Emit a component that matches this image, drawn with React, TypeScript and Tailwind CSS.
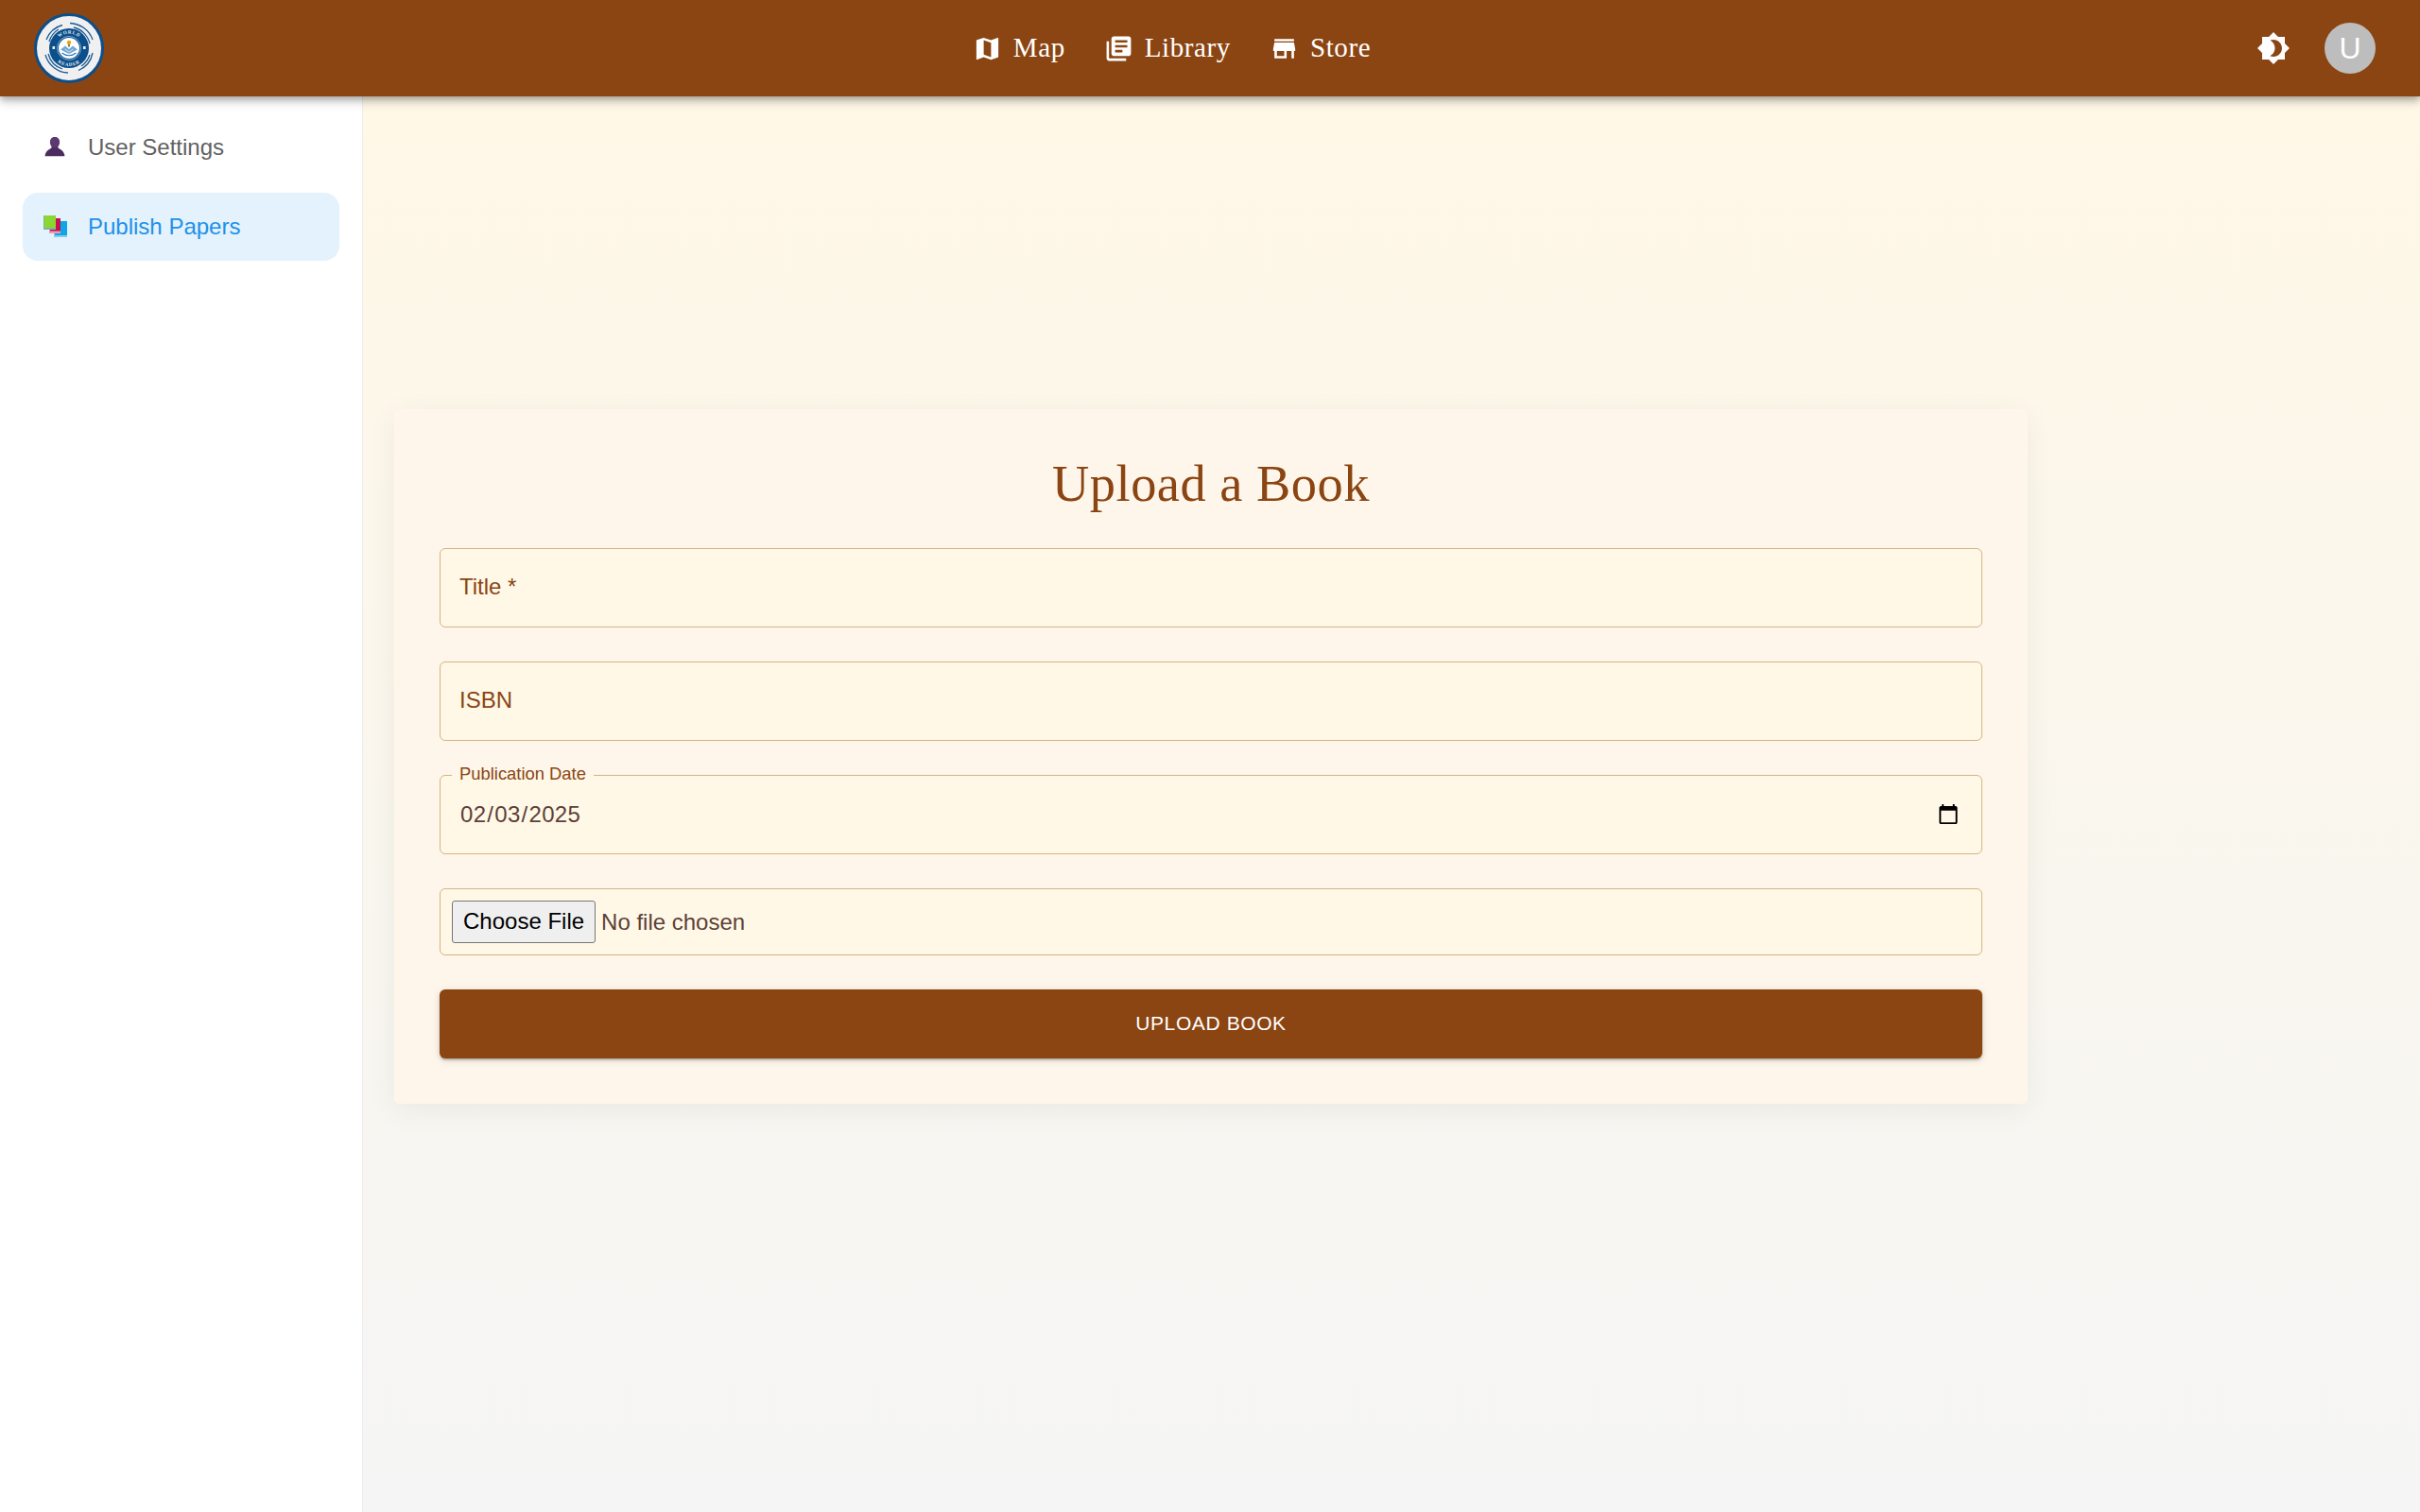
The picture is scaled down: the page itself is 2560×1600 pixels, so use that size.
const navLinks = [
  {
    label: 'Map',
    path: 'M20.5 3l-.16.03L15 5.1 9 3 3.36 4.9c-.21.07-.36.25-.36.48V20.5c0 .28.22.5.5.5l.16-.03L9 18.9l6 2.1 5.64-1.9c.21-.07.36-.25.36-.48V3.5c0-.28-.22-.5-.5-.5zM15 19l-6-2.11V5l6 2.11V19z',
  },
  {
    label: 'Library',
    path: 'M4 6H2v14c0 1.1.9 2 2 2h14v-2H4V6zm16-4H8c-1.1 0-2 .9-2 2v12c0 1.1.9 2 2 2h12c1.1 0 2-.9 2-2V4c0-1.1-.9-2-2-2zm-1 9H9V9h10v2zm-4 4H9v-2h6v2zm4-8H9V5h10v2z',
  },
  {
    label: 'Store',
    path: 'M20 4H4v2h16V4zm1 10v-2l-1-5H4l-1 5v2h1v6h10v-6h4v6h2v-6h1zm-9 4H6v-4h6v4z',
  },
];

const serif = "font-['Liberation_Serif',Georgia,serif]";

function Logo() {
  return (
    <svg viewBox="0 0 74 74" className="w-[74px] h-[74px] shrink-0">
      <defs>
        <path id="logo-top" d="M 21.5 37 A 15.5 15.5 0 0 1 52.5 37" />
        <path id="logo-bottom" d="M 18 37 A 19 19 0 0 0 56 37" />
      </defs>
      <circle cx="37" cy="37" r="35.5" fill="#f0f0f0" stroke="#0b4f8c" strokeWidth="3" />
      {/* broken rings round the seal */}
      <g fill="none" stroke="#1a5c98" strokeWidth="1.3">
        <path d="M 13 28 A 25.5 25.5 0 0 1 30 12.5" />
        <path d="M 38 10.5 A 26.5 26.5 0 0 1 62 28" />
        <path d="M 62 42 A 25.5 25.5 0 0 1 47 60.5" />
        <path d="M 36 63 A 26 26 0 0 1 12 44" />
        <path d="M 16 30 A 22.5 22.5 0 0 1 26 17" />
        <path d="M 42 15 A 23 23 0 0 1 59 32" />
        <path d="M 59 44 A 23 23 0 0 1 50 56" />
        <path d="M 30 59 A 23 23 0 0 1 15 43" />
      </g>
      <circle cx="37" cy="37" r="21" fill="#0b4f8c" />
      <circle cx="37" cy="37" r="12.5" fill="none" stroke="#9fc3e0" strokeWidth="0.8" />
      <circle cx="37" cy="37" r="11" fill="#ffffff" />
      {/* open book and waves */}
      <path d="M28 38.500 L33 34.500 L37 38 L41 34.500 L46 38.500 L37 43 Z" fill="#6ea6d4" />
      <path d="M29.500 42 Q37 47.500 44.500 42" fill="none" stroke="#2a73b5" strokeWidth="1.2" />
      <path d="M32.500 38 L37 41 L41.500 38" fill="none" stroke="#ffffff" strokeWidth="0.7" />
      <circle cx="37" cy="31" r="2.200" fill="#e8a317" />
      <rect x="36.200" y="33" width="1.600" height="2.500" fill="#6b5a2a" />
      <path d="M19.500 35 h2.600 v3 h-2.600 z M52 35 h2.600 v3 h-2.600 z" fill="#f0f0f0" />
      <text fontSize="5" fontWeight="700" fill="#f0f0f0" letterSpacing="0.8" textAnchor="middle" fontFamily="'Liberation Serif', serif">
        <textPath href="#logo-top" startOffset="50%">WORLD</textPath>
      </text>
      <text fontSize="5" fontWeight="700" fill="#f0f0f0" letterSpacing="0.8" textAnchor="middle" fontFamily="'Liberation Serif', serif">
        <textPath href="#logo-bottom" startOffset="50%">READER</textPath>
      </text>
    </svg>
  );
}

function UserIcon() {
  return (
    <svg viewBox="0 0 24 26" className="w-[22px] h-[24px] shrink-0">
      <path d="M12 1c3.4 0 5.4 2.6 5.4 6 0 1.6-.5 3-1.3 4.2-.6 1-.7 2 .1 2.6 1.9 1.3 5.6 2.6 6.8 7.2.3 1.2.3 2 .3 2H.7s0-.8.3-2c1.200-4.600 4.900-5.900 6.800-7.200.8-.6.7-1.600.1-2.600C7.100 10 6.600 8.600 6.600 7 6.600 3.600 8.600 1 12 1z" fill="#4b2c5e" />
      <path d="M12 1c3.4 0 5.4 2.600 5.400 6 0 3.600-2.500 6.500-5.400 6.500S6.600 10.600 6.600 7C6.600 3.600 8.600 1 12 1z" fill="#5b3a72" />
    </svg>
  );
}

function BooksIcon() {
  return (
    <svg viewBox="0 0 26 24" className="w-[26px] h-[24px] shrink-0">
      <rect x="11" y="6.500" width="14" height="16.500" rx="0.500" fill="#8ecae6" />
      <rect x="12" y="6" width="13" height="15" fill="#0ea5e9" />
      <rect x="6" y="3.500" width="12" height="15.500" rx="0.500" fill="#e3a0b8" />
      <rect x="7" y="3" width="11" height="13.500" fill="#c8104f" />
      <rect x="0" y="0" width="13" height="15" rx="0.500" fill="#7fb3a0" />
      <rect x="1" y="0" width="12" height="13" fill="#8cd630" />
    </svg>
  );
}

function Field({ label }: { label: string }) {
  return (
    <div className="relative h-[84px] rounded-[6px] border border-[#d4b483] bg-[#fff8e7]">
      <input aria-label={label} className="w-full h-full bg-transparent px-[20px] outline-none" />
      <span className="absolute left-[20px] top-[25px] text-[24px] leading-[30px] text-[#8b4513] pointer-events-none">
        {label}
      </span>
    </div>
  );
}

export default function App() {
  return (
    <div className="h-screen flex flex-col overflow-hidden font-['Liberation_Sans',Arial,sans-serif]">
      <header className="relative z-10 h-[102px] shrink-0 flex items-center pl-[36px] pr-[47px] bg-[#8b4513] text-white shadow-[0_3px_6px_-1px_rgba(0,0,0,0.2),0_6px_8px_0_rgba(0,0,0,0.14),0_2px_16px_0_rgba(0,0,0,0.12)]">
        <Logo />
        <nav className={`flex-1 flex justify-center items-center gap-[41px] pr-[18px] text-[29px] tracking-[0.6px] ${serif}`}>
          {navLinks.map((link) => (
            <a key={link.label} className="flex items-center gap-[12px]">
              <svg viewBox="0 0 24 24" className="w-[31px] h-[31px]" fill="currentColor">
                <path d={link.path} />
              </svg>
              {link.label}
            </a>
          ))}
        </nav>
        <div className="flex items-center gap-[36px]">
          <svg viewBox="0 0 24 24" className="w-[36px] h-[36px]" fill="currentColor">
            <path d="M20 8.690V4h-4.690L12 .690 8.690 4H4v4.690L.690 12 4 15.310V20h4.690L12 23.310 15.310 20H20v-4.690L23.310 12 20 8.690zM12 18c-.890 0-1.740-.200-2.500-.550C11.560 16.500 13 14.420 13 12s-1.440-4.500-3.500-5.450C10.260 6.200 11.110 6 12 6c3.310 0 6 2.690 6 6s-2.690 6-6 6z" />
          </svg>
          <div className="w-[54px] h-[54px] rounded-full bg-[#bdbdbd] flex items-center justify-center text-[32px] text-white">
            U
          </div>
        </div>
      </header>

      <div className="flex-1 flex min-h-0">
        <aside className="w-[384px] shrink-0 bg-white border-r border-[#ececec] pt-[18px] px-[24px] flex flex-col gap-[12px]">
          <a className="h-[72px] flex items-center gap-[24px] pl-[23px] rounded-[16px] text-[24px] text-[#616161]">
            <UserIcon />
            User Settings
          </a>
          <a className="h-[72px] flex items-center gap-[21px] pl-[22px] rounded-[16px] text-[24px] text-[#2190ea] bg-[#e3f2fd]">
            <BooksIcon />
            Publish Papers
          </a>
        </aside>

        <main className="flex-1 flex items-center pb-[102px] pl-[33px] bg-gradient-to-b from-[#fff8e7] to-[#f5f5f5]">
          <div className="w-[1728px] rounded-[6px] bg-[#fef6ea] p-[48px] shadow-[0_6px_32px_rgba(0,0,0,0.06)]">
            <h1 className={`h-[63px] mb-[36px] text-center text-[54.4px] leading-[63px] tracking-[0.5px] text-[#8b4513] ${serif}`}>
              Upload a Book
            </h1>
            <div className="flex flex-col gap-[36px]">
              <Field label="Title *" />
              <Field label="ISBN" />
              <fieldset className="h-[91px] -mt-[7px] rounded-[6px] border border-[#d4b483] bg-[#fff8e7] px-[12px]">
                <legend className="px-[8px] text-[18.4px] leading-[16px] text-[#8b4513]">
                  <span className="block -translate-y-[2px]">Publication Date</span>
                </legend>
                <input
                  type="date"
                  defaultValue="2025-02-03"
                  className="block w-full mt-[15px] px-[8px] pr-[9px] bg-transparent text-[24px] tracking-[0.3px] text-[#5d4037] outline-none"
                />
              </fieldset>
              <div className="h-[71px] rounded-[6px] border border-[#d4b483] bg-[#fff8e7] flex items-center px-[12px]">
                <input
                  type="file"
                  className="w-full text-[24px] text-[#5d4037] file:h-[45px] file:px-[11px] file:mr-[6px] file:border file:border-solid file:border-[#767676] file:rounded-[3px] file:bg-[#efefef] file:text-black"
                />
              </div>
              <button className="h-[73px] rounded-[6px] bg-[#8b4513] text-white text-[21px] font-medium tracking-[0.6px] shadow-[0_3px_2px_-2px_rgba(0,0,0,0.2),0_2px_3px_0_rgba(0,0,0,0.14),0_2px_8px_0_rgba(0,0,0,0.12)]">
                UPLOAD BOOK
              </button>
            </div>
          </div>
        </main>
      </div>
    </div>
  );
}
